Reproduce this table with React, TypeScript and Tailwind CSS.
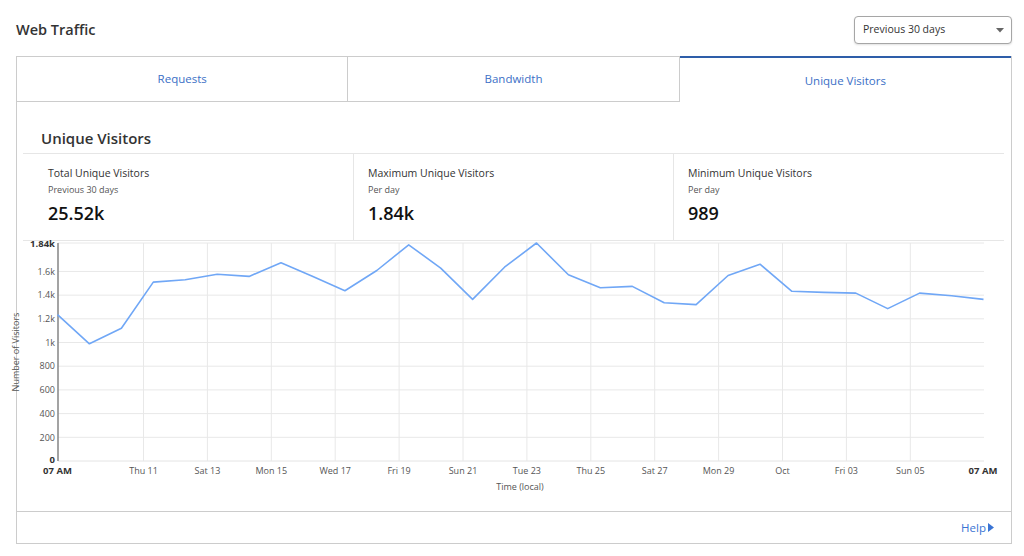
import React from "react";

// daily unique visitors, previous 30 days
const visitors = [
  1235, 989, 1120, 1510, 1530, 1577, 1558, 1673, 1558, 1437, 1608, 1825, 1628, 1364, 1636,
  1840, 1572, 1463, 1474, 1336, 1320, 1566, 1661, 1432, 1423, 1417, 1286, 1417, 1395, 1364,
];

const yTicks = [
  { v: 1600, label: "1.6k" },
  { v: 1400, label: "1.4k" },
  { v: 1200, label: "1.2k" },
  { v: 1000, label: "1k" },
  { v: 800, label: "800" },
  { v: 600, label: "600" },
  { v: 400, label: "400" },
  { v: 200, label: "200" },
];

const xTicks = [
  "Thu 11", "Sat 13", "Mon 15", "Wed 17", "Fri 19", "Sun 21", "Tue 23",
  "Thu 25", "Sat 27", "Mon 29", "Oct", "Fri 03", "Sun 05",
];

type Tab = "requests" | "bandwidth" | "visitors";

function TrafficChart() {
  // viewBox is in page pixels so the numbers read straight off the layout
  const left = 58;
  const right = 984;
  const top = 243;
  const bottom = 461;
  const y = (v: number) => bottom - (v * (bottom - top)) / 1840;
  const x = (i: number) => 57.5 + (i * (983.5 - 57.5)) / 29;
  const points = visitors.map((v, i) => `${x(i).toFixed(1)},${y(v).toFixed(1)}`).join(" ");

  return (
    <svg width="994" height="270" viewBox="17 241 994 270" className="block overflow-visible">
      {/* grid */}
      {yTicks.map((t) => (
        <line key={t.v} x1={left} x2={right} y1={y(t.v)} y2={y(t.v)} stroke="#e8e8e8" strokeWidth="1" />
      ))}
      <line x1={left} x2={right} y1={top} y2={top} stroke="#e8e8e8" strokeWidth="1" />
      <line x1={left} x2={right} y1={bottom} y2={bottom} stroke="#e4e4e4" strokeWidth="1" />
      {xTicks.map((_, k) => (
        <line key={k} x1={143.5 + k * 63.9} x2={143.5 + k * 63.9} y1={top} y2={bottom} stroke="#e8e8e8" strokeWidth="1" />
      ))}
      <line x1={left} x2={left} y1={top} y2={bottom} stroke="#8c8c8c" strokeWidth="1.6" />

      {/* y labels */}
      <g fontSize="9" fill="#555" textAnchor="end">
        {yTicks.map((t) => (
          <text key={t.v} x={55} y={y(t.v) + 3.2}>
            {t.label}
          </text>
        ))}
      </g>
      <text x={55} y={top + 3.5} fontSize="9.5" fontWeight="700" fill="#333" textAnchor="end">
        1.84k
      </text>
      <text x={55} y={bottom + 2} fontSize="9.5" fontWeight="700" fill="#333" textAnchor="end">
        0
      </text>

      {/* x labels */}
      <g fontSize="9" fill="#555" textAnchor="middle">
        {xTicks.map((l, k) => (
          <text key={l} x={143.5 + k * 63.9} y={474}>
            {l}
          </text>
        ))}
      </g>
      <text x={57.5} y={474} fontSize="9.5" fontWeight="700" fill="#333" textAnchor="middle">
        07 AM
      </text>
      <text x={983} y={474} fontSize="9.5" fontWeight="700" fill="#333" textAnchor="middle">
        07 AM
      </text>

      <text x={520} y={490} fontSize="9" fill="#555" textAnchor="middle">
        Time (local)
      </text>
      <text x={19} y={352} fontSize="9" fill="#555" textAnchor="middle" transform="rotate(-90 19 352)">
        Number of Visitors
      </text>

      <polyline points={points} fill="none" stroke="#70a7f6" strokeWidth="1.6" strokeLinejoin="round" />
    </svg>
  );
}

function Stat({ title, sub, value, first }: { title: string; sub: string; value: string; first?: boolean }) {
  return (
    <div className={`pt-3 ${first ? "pl-[25px]" : "border-l border-[#e6e6e6] pl-[14px]"}`}>
      <div className="text-[10.5px] leading-[15px] text-[#333]">{title}</div>
      <div className="mt-[2px] text-[9px] leading-[13px] text-[#555]">{sub}</div>
      <div className="mt-[5px] text-[18px] font-semibold leading-[24px] text-[#111]">{value}</div>
    </div>
  );
}

export default function App() {
  const [tab, setTab] = React.useState<Tab>("visitors");
  const tabs: { id: Tab; label: string }[] = [
    { id: "requests", label: "Requests" },
    { id: "bandwidth", label: "Bandwidth" },
    { id: "visitors", label: "Unique Visitors" },
  ];

  return (
    <div className="h-[556px] w-[1024px] bg-white pl-4 pr-3 font-['Open_Sans','Noto_Sans',sans-serif] text-[#333]">
      {/* Header */}
      <div className="flex items-center justify-between pt-4 pb-3">
        <h1 className="text-[14.5px] font-semibold leading-[28px] text-[#333]">Web Traffic</h1>
        <button className="flex h-[28px] w-[158px] items-center justify-between rounded-[4px] border border-[#a6a6a6] bg-white pr-[7px] pl-2 text-[10.5px] text-[#333] shadow-[0_1px_2px_rgba(0,0,0,0.12)]">
          <span>Previous 30 days</span>
          <svg width="8" height="5" viewBox="0 0 8 5">
            <path d="M0 0h8L4 4.5z" fill="#666" />
          </svg>
        </button>
      </div>

      {/* Panel */}
      <div className="flex h-[488px] flex-col border-x border-b border-[#cccccc]">
        <div className="grid h-[46px] grid-cols-3">
          {tabs.map((t, i) =>
            tab === t.id ? (
              <button
                key={t.id}
                onClick={() => setTab(t.id)}
                className="border-t-2 border-[#2e5ea9] pt-[2px] text-[11.5px] text-[#3b6fc6]"
              >
                {t.label}
              </button>
            ) : (
              <button
                key={t.id}
                onClick={() => setTab(t.id)}
                className={`border-y border-[#cccccc] text-[11.5px] text-[#3b6fc6] ${i < 2 ? "border-r" : ""}`}
              >
                {t.label}
              </button>
            )
          )}
        </div>

        <div className="pr-[7px] pl-[6px]">
          <h2 className="pt-[26px] pb-[5px] pl-[18px] text-[15px] font-semibold leading-[20px] text-[#333]">
            Unique Visitors
          </h2>
          <div className="grid h-[88px] grid-cols-[330px_320px_1fr] border-y border-[#e6e6e6]">
            <Stat first title="Total Unique Visitors" sub="Previous 30 days" value="25.52k" />
            <Stat title="Maximum Unique Visitors" sub="Per day" value="1.84k" />
            <Stat title="Minimum Unique Visitors" sub="Per day" value="989" />
          </div>
        </div>

        <TrafficChart />

        <div className="flex h-[32px] items-center justify-end border-t border-[#cccccc] pr-[17px]">
          <a href="#" className="flex items-center gap-[2px] text-[11.5px] text-[#3a74d4]">
            Help
            <svg width="6" height="9" viewBox="0 0 6 9">
              <path d="M0 0l6 4.5L0 9z" fill="#3a74d4" />
            </svg>
          </a>
        </div>
      </div>
    </div>
  );
}
